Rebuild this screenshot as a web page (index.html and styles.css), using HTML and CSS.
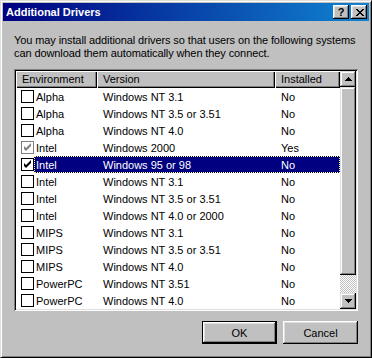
FILE: index.html
```html
<!DOCTYPE html>
<html lang="en">
<head>
  <meta charset="UTF-8" />
  <title>Additional Drivers</title>
  <link rel="stylesheet" href="styles.css">
</head>
<body>
  <div class="window">
    <div class="titlebar">
      <span class="title">Additional Drivers</span>
      <div class="caption-btns">
        <span class="cap-btn help">?</span>
        <span class="cap-btn close">
          <svg width="8" height="7" viewBox="0 0 8 7"><path d="M0 0h2v1h1v1h2v-1h1v-1h2v1h-1v1h-1v1h-1v1h1v1h1v1h1v1h-2v-1h-1v-1h-2v1h-1v1h-2v-1h1v-1h1v-1h1v-1h-1v-1h-1v-1h-1z" fill="#000"/></svg>
        </span>
      </div>
    </div>

    <div class="content">
      <p class="intro">You may install additional drivers so that users on the following systems<br>can download them automatically when they connect.</p>

      <div class="listview">
        <div class="list-main">
          <div class="header">
            <div class="hcell c-env">Environment</div>
            <div class="hcell c-ver">Version</div>
            <div class="hcell c-inst">Installed</div>
          </div>
          <div class="rows">
            <div class="row"><span class="check"></span><div class="cells"><span class="c-env">Alpha</span><span class="c-ver">Windows NT 3.1</span><span class="c-inst">No</span></div></div>
            <div class="row"><span class="check"></span><div class="cells"><span class="c-env">Alpha</span><span class="c-ver">Windows NT 3.5 or 3.51</span><span class="c-inst">No</span></div></div>
            <div class="row"><span class="check"></span><div class="cells"><span class="c-env">Alpha</span><span class="c-ver">Windows NT 4.0</span><span class="c-inst">No</span></div></div>
            <div class="row"><span class="check checked disabled"><svg width="11" height="11" viewBox="0 0 11 11"><path d="M2 4v3l2 2 5-5v-3l-5 5z" fill="#808080"/></svg></span><div class="cells"><span class="c-env">Intel</span><span class="c-ver">Windows 2000</span><span class="c-inst">Yes</span></div></div>
            <div class="row selected"><span class="check checked"><svg width="11" height="11" viewBox="0 0 11 11"><path d="M2 4v3l2 2 5-5v-3l-5 5z" fill="#000"/></svg></span><div class="cells"><span class="c-env">Intel</span><span class="c-ver">Windows 95 or 98</span><span class="c-inst">No</span></div></div>
            <div class="row"><span class="check"></span><div class="cells"><span class="c-env">Intel</span><span class="c-ver">Windows NT 3.1</span><span class="c-inst">No</span></div></div>
            <div class="row"><span class="check"></span><div class="cells"><span class="c-env">Intel</span><span class="c-ver">Windows NT 3.5 or 3.51</span><span class="c-inst">No</span></div></div>
            <div class="row"><span class="check"></span><div class="cells"><span class="c-env">Intel</span><span class="c-ver">Windows NT 4.0 or 2000</span><span class="c-inst">No</span></div></div>
            <div class="row"><span class="check"></span><div class="cells"><span class="c-env">MIPS</span><span class="c-ver">Windows NT 3.1</span><span class="c-inst">No</span></div></div>
            <div class="row"><span class="check"></span><div class="cells"><span class="c-env">MIPS</span><span class="c-ver">Windows NT 3.5 or 3.51</span><span class="c-inst">No</span></div></div>
            <div class="row"><span class="check"></span><div class="cells"><span class="c-env">MIPS</span><span class="c-ver">Windows NT 4.0</span><span class="c-inst">No</span></div></div>
            <div class="row"><span class="check"></span><div class="cells"><span class="c-env">PowerPC</span><span class="c-ver">Windows NT 3.51</span><span class="c-inst">No</span></div></div>
            <div class="row"><span class="check"></span><div class="cells"><span class="c-env">PowerPC</span><span class="c-ver">Windows NT 4.0</span><span class="c-inst">No</span></div></div>
          </div>
        </div>

        <div class="scrollbar">
          <div class="sb-btn"><svg width="7" height="4" viewBox="0 0 7 4"><path d="M3 0h1v1h1v1h1v1h1v1h-7v-1h1v-1h1v-1h1z" fill="#000"/></svg></div>
          <div class="sb-thumb"></div>
          <div class="sb-track"></div>
          <div class="sb-btn"><svg width="7" height="4" viewBox="0 0 7 4"><path d="M0 0h7v1h-1v1h-1v1h-1v1h-1v-1h-1v-1h-1v-1h-1z" fill="#000"/></svg></div>
        </div>
      </div>

      <div class="buttons">
        <button class="btn default">OK</button>
        <button class="btn">Cancel</button>
      </div>
    </div>
  </div>
</body>
</html>
```

FILE: styles.css
```css
* { box-sizing: border-box; margin: 0; padding: 0; }
body {
  font-family: "Liberation Sans", Arial, sans-serif;
  font-size: 11px;
  color: #000;
  background: #c0c0c0;
}
.window {
  width: 372px;
  height: 358px;
  background: #c0c0c0;
  border: 1px solid;
  border-color: #dfdfdf #000 #000 #dfdfdf;
  box-shadow: inset 1px 1px #fff, inset -1px -1px #808080;
  padding: 2px;
  display: flex;
  flex-direction: column;
}
.titlebar {
  height: 18px;
  background: linear-gradient(to right, #000080, #1084d0);
  display: flex;
  align-items: center;
  justify-content: space-between;
  padding: 0 2px 0 3px;
}
.title {
  color: #fff;
  font-weight: bold;
  font-size: 11px;
}
.caption-btns {
  display: flex;
  gap: 2px;
}
.cap-btn {
  width: 16px;
  height: 14px;
  background: #c0c0c0;
  box-shadow: inset -1px -1px #000, inset 1px 1px #fff, inset -2px -2px #808080, inset 2px 2px #dfdfdf;
  display: flex;
  align-items: center;
  justify-content: center;
}
.cap-btn.help {
  font-weight: bold;
  font-size: 11px;
  line-height: 14px;
  padding-bottom: 1px;
}
.cap-btn.close svg { margin-left: 1px; }

.content {
  flex: 1;
  padding: 13px 11px 0 11px;
  display: flex;
  flex-direction: column;
}
.intro {
  line-height: 13px;
  margin-bottom: 9px;
  letter-spacing: -0.1px;
  white-space: nowrap;
}

.listview {
  width: 344px;
  height: 242px;
  background: #fff;
  padding: 2px;
  box-shadow: inset 1px 1px #808080, inset -1px -1px #fff, inset 2px 2px #000, inset -2px -2px #dfdfdf;
  display: flex;
}
.list-main {
  flex: 1;
  display: flex;
  flex-direction: column;
}
.header {
  display: flex;
  height: 17px;
}
.hcell {
  background: #c0c0c0;
  box-shadow: inset 1px 1px #fff, inset -1px -1px #000, inset -2px -2px #808080;
  padding-left: 6px;
  line-height: 16px;
}
.header .c-env { width: 81px; }
.header .c-ver { width: 178px; }
.header .c-inst { width: 65px; }

.row {
  display: flex;
  height: 17px;
  align-items: center;
}
.check {
  width: 13px;
  height: 13px;
  margin: 0 0 0 5px;
  border: 1px solid #000;
  background: #fff;
  display: flex;
  align-items: center;
  justify-content: center;
  flex-shrink: 0;
}
.check.disabled { border-color: #808080; }
.cells {
  display: flex;
  height: 17px;
  align-items: center;
}
.cells span { white-space: nowrap; }
.cells .c-env { width: 63px; padding-left: 2px; }
.cells .c-ver { width: 178px; padding-left: 6px; }
.cells .c-inst { width: 65px; padding-left: 6px; }
.row.selected .cells {
  background: #000080;
  color: #fff;
  outline: 1px dotted #ffff80;
  outline-offset: -1px;
}

.scrollbar {
  width: 16px;
  display: flex;
  flex-direction: column;
}
.sb-btn, .sb-thumb {
  background: #c0c0c0;
  box-shadow: inset -1px -1px #000, inset 1px 1px #dfdfdf, inset -2px -2px #808080, inset 2px 2px #fff;
}
.sb-btn {
  height: 16px;
  display: flex;
  align-items: center;
  justify-content: center;
}
.sb-thumb { height: 188px; }
.sb-track {
  flex: 1;
  background: repeating-conic-gradient(#c0c0c0 0 25%, #fff 0 50%) 0 0 / 2px 2px;
}

.buttons {
  display: flex;
  justify-content: flex-end;
  gap: 6px;
  margin-top: 10px;
}
.btn {
  width: 75px;
  height: 23px;
  font-family: inherit;
  font-size: 11px;
  background: #c0c0c0;
  border: none;
  box-shadow: inset -1px -1px #000, inset 1px 1px #fff, inset -2px -2px #808080, inset 2px 2px #dfdfdf;
}
.btn.default {
  border: 1px solid #000;
}
```
